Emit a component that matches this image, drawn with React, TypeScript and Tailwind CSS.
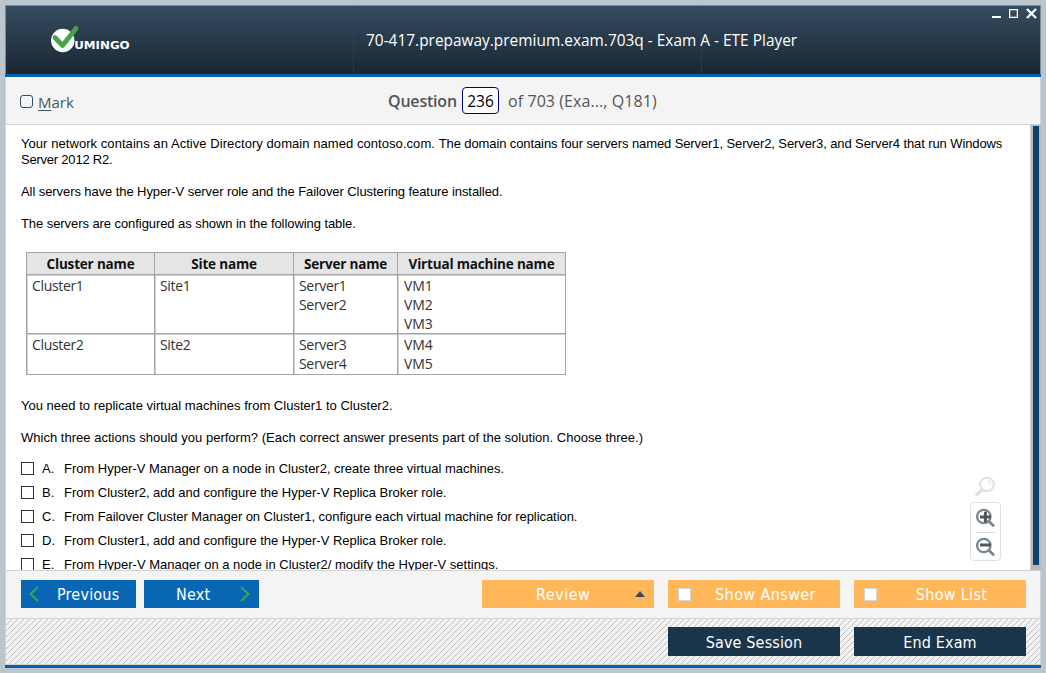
import { ReactNode } from "react";

const options = [
  { letter: "A.", text: "From Hyper-V Manager on a node in Cluster2, create three virtual machines.", spacing: "tracking-[-0.02px]" },
  { letter: "B.", text: "From Cluster2, add and configure the Hyper-V Replica Broker role.", spacing: "tracking-[-0.03px]" },
  { letter: "C.", text: "From Failover Cluster Manager on Cluster1, configure each virtual machine for replication.", spacing: "tracking-[-0.06px]" },
  { letter: "D.", text: "From Cluster1, add and configure the Hyper-V Replica Broker role.", spacing: "tracking-[-0.03px]" },
  { letter: "E.", text: "From Hyper-V Manager on a node in Cluster2/ modify the Hyper-V settings.", spacing: "tracking-[0px]" },
];

const headings = ["Cluster name", "Site name", "Server name", "Virtual machine name"];
const rows = [
  [["Cluster1"], ["Site1"], ["Server1", "Server2"], ["VM1", "VM2", "VM3"]],
  [["Cluster2"], ["Site2"], ["Server3", "Server4"], ["VM4", "VM5"]],
];

function Logo() {
  return (
    <svg width="84" height="30" viewBox="0 0 84 30" className="block">
      <circle cx="12.8" cy="15.5" r="11.7" fill="#fff" />
      <path d="M4.9 12.5 L12.6 20.5 L26 3.5" fill="none" stroke="#45a548" strokeWidth="4.8" strokeLinecap="round" strokeLinejoin="round" />
      <text x="24.2" y="24.2" textLength="55.5" lengthAdjust="spacingAndGlyphs" fontFamily="DejaVu Sans, sans-serif" fontWeight="bold" fontSize="9.6" fill="#fff">UMINGO</text>
    </svg>
  );
}

function WindowControls() {
  return (
    <svg width="50" height="12" viewBox="0 0 50 12" className="block" shapeRendering="crispEdges">
      <rect x="2" y="9" width="9" height="2" fill="#fff" />
      <rect x="19.5" y="2.5" width="8" height="8" fill="none" stroke="#fff" />
      <rect x="20.5" y="3.5" width="6" height="6" fill="none" stroke="#807b74" />
      <path d="M37 2 L46 11 M46 2 L37 11" stroke="#fff" strokeWidth="2.4" shapeRendering="auto" />
    </svg>
  );
}

function Magnifier({ sign }: { sign: "plus" | "minus" }) {
  return (
    <svg width="20" height="20" viewBox="0 0 20 20" className="block">
      <circle cx="7.8" cy="8.5" r="6.7" fill="none" stroke="#788692" strokeWidth="2.3" />
      <path d="M12.8 13.2 L17.2 17.5" stroke="#788692" strokeWidth="2.8" strokeLinecap="round" />
      {sign === "plus" ? (
        <path d="M4 9 H14.8 M9.4 3.7 V14.3" stroke="#555" strokeWidth="3" />
      ) : (
        <path d="M4 8 H14.8" stroke="#555" strokeWidth="3" />
      )}
    </svg>
  );
}

function ToggleButton({ children }: { children: ReactNode }) {
  return (
    <button className="flex h-7 w-[172px] items-center bg-[#ffb759] pl-[10px] text-white">
      <span className="h-[13px] w-[13px] shrink-0 border border-[#d5d5d5] bg-white" />
      <span className="flex flex-1 justify-center pt-0.5">{children}</span>
    </button>
  );
}

export default function App() {
  return (
    <div className="flex h-[673px] w-[1046px] flex-col overflow-hidden bg-[#bac6cc] px-[5px] pt-[5px]">
      <header className="flex h-[69px] shrink-0 border border-b-0 border-[#7d8c94] bg-linear-to-b from-[#354d61] to-[#1b2733] text-white">
        <div className="w-[348px] shrink-0 border-r border-dotted border-[#323d8c] pl-[44px] pt-[19px]">
          <Logo />
        </div>
        <div className="flex w-[348px] shrink-0 items-center whitespace-nowrap border-r border-dotted border-[#323d8c] pl-[12px] pt-px">
          <h1 className="w-[458px] shrink-0 font-['Open_Sans','Noto_Sans',sans-serif] text-[15.4px] font-medium tracking-[0.02px]">
            <span>70-417.prepaway.premium.exam.703q - Exam A - ETE Player</span>
          </h1>
        </div>
        <div className="flex flex-1 justify-end pt-px">
          <WindowControls />
        </div>
      </header>
      <div className="h-[3px] shrink-0 bg-[#0560b0]" />

      <div className="flex h-[48px] shrink-0 items-center border-x border-b border-[#d2d2d2] bg-[#f4f4f4] font-['Open_Sans','Noto_Sans',sans-serif] text-[16px] text-[#555]">
        <label className="flex w-[382px] items-center gap-[5px] pl-[14px] pt-1 text-[15px] text-[#43586a]">
          <span className="mb-0.5 h-[13px] w-[13px] rounded-[3px] border border-[#354d61]" />
          <span><u className="underline-offset-2">M</u>ark</span>
        </label>
        <span className="w-[69px] font-semibold tracking-[-0.2px]"><span>Question</span></span>
        <span className="ml-[5px] flex h-[27px] w-[37px] items-center justify-center rounded-[4px] border border-[#00007f] bg-white pt-0.5 text-[15.5px] text-black">236</span>
        <span className="ml-[9px] whitespace-nowrap tracking-[0.08px]">of 703 (Exa..., Q181)</span>
      </div>

      <main className="flex h-[445px] shrink-0 overflow-hidden border-l border-[#d2d2d2] bg-white">
        <div className="relative w-[1025px] overflow-hidden border-r border-[#d2d2d2] pl-[15px] pt-[11px] font-['Liberation_Sans',Arial,sans-serif] text-[13px] leading-4 text-black">
          <p className="whitespace-nowrap">
            <span className="tracking-[0.06px]">Your network contains an Active Directory domain named contoso.com. </span>
            <span className="tracking-[-0.1px]">The domain contains four servers named Server1, Server2, Server3, and Server4 that run Windows</span>
            <br />
            <span className="tracking-[-0.22px]">Server 2012 R2.</span>
          </p>
          <p className="mt-4"><span className="tracking-[-0.08px]">All servers have the Hyper-V server role and the Failover Clustering feature installed.</span></p>
          <p className="mt-4"><span className="tracking-[-0.07px]">The servers are configured as shown in the following table.</span></p>

          <div className="ml-[5px] mt-5 grid h-[123px] w-[540px] grid-cols-[128px_139px_104px_168px] grid-rows-[22px_59px_41px] border-b border-r border-[#a5a5a5] font-['Open_Sans','Noto_Sans',sans-serif] text-[14px] leading-[18.8px] tracking-[-0.33px] text-[#333]">
            {headings.map((h) => (
              <div key={h} className="flex items-center justify-center border-l border-t border-[#a5a5a5] bg-[#e5e5e5] pt-0.5 text-[13.5px] font-bold tracking-[-0.18px] text-[#111]">
                <span className="whitespace-nowrap">{h}</span>
              </div>
            ))}
            {rows.flat().map((cell) => (
              <div key={cell[0]} className="border-l border-t border-[#a5a5a5] pl-[5px] pt-0.5 shadow-[inset_1px_1px_0_#d0d0d0] nth-[4n]:pl-1.5 nth-[4n]:tracking-[-0.1px]">
                {cell.map((line) => (
                  <div key={line}><span>{line}</span></div>
                ))}
              </div>
            ))}
          </div>

          <p className="mt-[23px]"><span className="tracking-[0.01px]">You need to replicate virtual machines from Cluster1 to Cluster2.</span></p>
          <p className="mt-4"><span className="tracking-[0.02px]">Which three actions should you perform? (Each correct answer presents part of the solution. Choose three.)</span></p>
          <ul className="mt-[10px]">
            {options.map((o) => (
              <li key={o.letter} className="flex h-6 items-center">
                <span className="h-[13px] w-[13px] border border-[#333]" />
                <span className="ml-2 w-[22px] pt-px">{o.letter}</span>
                <span className={"pt-px " + o.spacing}>{o.text}</span>
              </li>
            ))}
          </ul>

          <div className="absolute left-[964px] top-[350px] flex flex-col items-center">
            <svg width="24" height="24" viewBox="0 0 24 24">
              <circle cx="13" cy="9.5" r="6.8" fill="none" stroke="#e0e0e0" strokeWidth="2" />
              <path d="M7.5 15 L3 19.5" stroke="#e0e0e0" strokeWidth="3.6" strokeLinecap="round" />
              <path d="M13.5 5.8 Q16.4 6.5 16.7 9.5" fill="none" stroke="#e0e0e0" strokeWidth="1.3" />
            </svg>
            <div className="mt-[3px] flex h-[59px] w-[31px] flex-col items-center rounded border border-[#e0e0e0] bg-white pt-[5px]">
              <Magnifier sign="plus" />
              <div className="my-1 h-px w-[19px] bg-[#ddd]" />
              <Magnifier sign="minus" />
            </div>
          </div>
        </div>
        <div className="w-[10px] bg-[#bab8b4] px-[2px] pt-px">
          <div className="h-[439px] bg-[#0d416e]" />
        </div>
      </main>

      <div className="flex h-[49px] shrink-0 items-start border border-[#d2d2d2] bg-[#f4f4f4] pl-[15px] pr-[14px] pt-[9px] font-['DejaVu_Sans_Condensed','DejaVu_Sans',sans-serif] text-[16px] text-white">
        <button className="flex h-7 w-[115px] items-center bg-[#0966b4] pl-[7px]">
          <svg width="12" height="18" viewBox="0 0 12 18"><path d="M10 2 L2.5 9 L10 16" fill="none" stroke="#3fa548" strokeWidth="2" /></svg>
          <span className="ml-[17px] pt-0.5 tracking-[0.2px]">Previous</span>
        </button>
        <button className="ml-2 flex h-7 w-[115px] items-center bg-[#0966b4] pl-8 pr-2">
          <span className="pt-0.5 tracking-[0.2px]">Next</span>
          <svg width="12" height="18" viewBox="0 0 12 18" className="ml-auto"><path d="M2 2 L9.5 9 L2 16" fill="none" stroke="#3fa548" strokeWidth="2" /></svg>
        </button>
        <button className="ml-auto flex h-7 w-[172px] items-center bg-[#ffb759] pl-[54px] pr-[9px]">
          <span className="pt-0.5 tracking-[0.5px]">Review</span>
          <svg width="10" height="6" viewBox="0 0 10 6" className="ml-auto"><path d="M0 6 L5 0 L10 6 Z" fill="#354d61" /></svg>
        </button>
        <div className="ml-[14px] tracking-[0.4px]"><ToggleButton>Show Answer</ToggleButton></div>
        <div className="ml-[14px] tracking-[0.3px]"><ToggleButton>Show List</ToggleButton></div>
      </div>

      <footer className="relative flex h-[46px] shrink-0 justify-end gap-[14px] border-x border-b border-[#d2d2d2] pr-[14px] pt-2 font-['DejaVu_Sans_Condensed','DejaVu_Sans',sans-serif] text-[16px] text-white">
        <svg className="absolute inset-0" width="1034" height="45" shapeRendering="crispEdges">
          <defs>
            <pattern id="hatch" width="6" height="6" patternUnits="userSpaceOnUse">
              <rect width="6" height="6" fill="#f4f4f4" />
              <path d="M0 5h1v1H0zM1 4h1v1H1zM2 3h1v1H2zM3 2h1v1H3zM4 1h1v1H4zM5 0h1v1H5z" fill="#bcbcbc" />
            </pattern>
          </defs>
          <rect width="1034" height="45" fill="url(#hatch)" />
        </svg>
        <button className="relative h-[29px] w-[172px] bg-[#1b354b] pt-0.5 tracking-[0.15px]"><span>Save Session</span></button>
        <button className="relative h-[29px] w-[172px] bg-[#1b354b] pt-0.5 tracking-[0.15px]"><span>End Exam</span></button>
      </footer>
      <div className="h-[3px] shrink-0 bg-[#0560b0]" />
    </div>
  );
}
